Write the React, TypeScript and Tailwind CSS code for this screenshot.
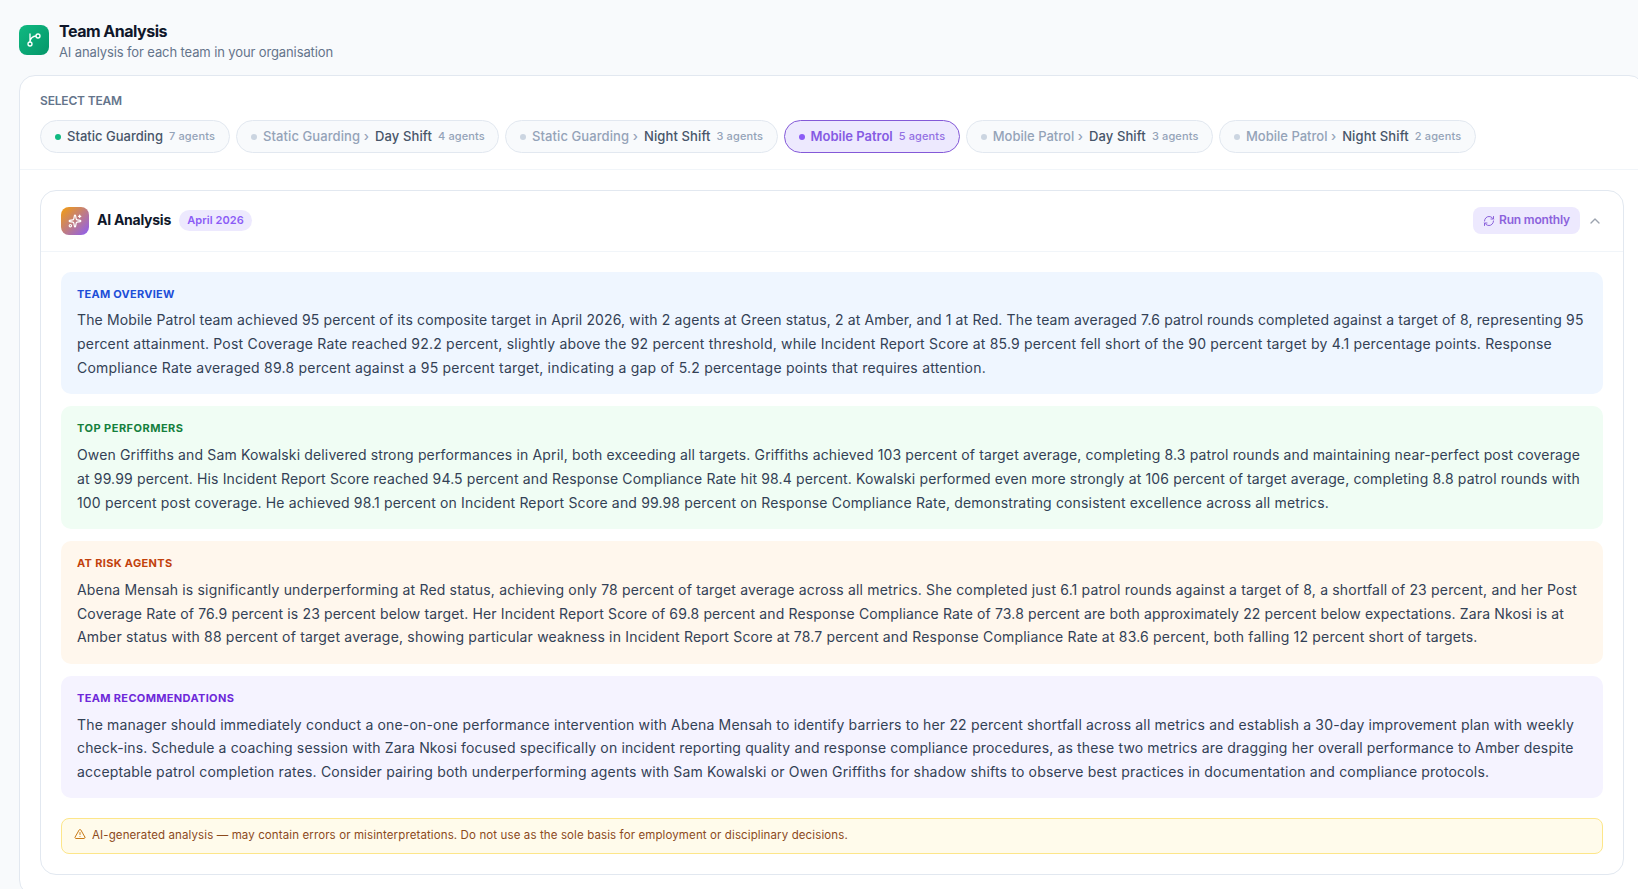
import { ChevronUp, RefreshCw, Sparkles, TriangleAlert } from 'lucide-react';

type Team = {
  parent?: string;
  name: string;
  agents: string;
  dot: string;
  parentTracking?: string;
  nameTracking: string;
  active?: boolean;
};

const teams: Team[] = [
  { name: 'Static Guarding', agents: '7 agents', dot: 'bg-[#10b981]', nameTracking: 'tracking-[0.011px]' },
  { parent: 'Static Guarding ›', name: 'Day Shift', agents: '4 agents', dot: 'bg-[#cbd5e1]', parentTracking: 'tracking-[0.088px]', nameTracking: 'tracking-[0.123px]' },
  { parent: 'Static Guarding ›', name: 'Night Shift', agents: '3 agents', dot: 'bg-[#cbd5e1]', parentTracking: 'tracking-[0.088px]', nameTracking: 'tracking-[0.112px]' },
  { name: 'Mobile Patrol', agents: '5 agents', dot: 'bg-[#8b5cf6]', nameTracking: 'tracking-[-0.01px]', active: true },
  { parent: 'Mobile Patrol ›', name: 'Day Shift', agents: '3 agents', dot: 'bg-[#cbd5e1]', parentTracking: 'tracking-[0.01px]', nameTracking: 'tracking-[0.123px]' },
  { parent: 'Mobile Patrol ›', name: 'Night Shift', agents: '2 agents', dot: 'bg-[#cbd5e1]', parentTracking: 'tracking-[0.01px]', nameTracking: 'tracking-[0.13px]' },
];

type Section = {
  title: string;
  box: string;
  heading: string;
  lines: { text: string; tracking: string }[];
};

const sections: Section[] = [
  {
    title: 'TEAM OVERVIEW',
    box: 'bg-[#eff6ff]',
    heading: 'text-[#1d4ed8] tracking-[0.25px]',
    lines: [
      { text: 'The Mobile Patrol team achieved 95 percent of its composite target in April 2026, with 2 agents at Green status, 2 at Amber, and 1 at Red. The team averaged 7.6 patrol rounds completed against a target of 8, representing 95', tracking: 'tracking-[0.139px]' },
      { text: 'percent attainment. Post Coverage Rate reached 92.2 percent, slightly above the 92 percent threshold, while Incident Report Score at 85.9 percent fell short of the 90 percent target by 4.1 percentage points. Response', tracking: 'tracking-[0.203px]' },
      { text: 'Compliance Rate averaged 89.8 percent against a 95 percent target, indicating a gap of 5.2 percentage points that requires attention.', tracking: 'tracking-[0.218px]' },
    ],
  },
  {
    title: 'TOP PERFORMERS',
    box: 'bg-[#f0fdf4]',
    heading: 'text-[#15803d] tracking-[0.48px]',
    lines: [
      { text: 'Owen Griffiths and Sam Kowalski delivered strong performances in April, both exceeding all targets. Griffiths achieved 103 percent of target average, completing 8.3 patrol rounds and maintaining near-perfect post coverage', tracking: 'tracking-[0.141px]' },
      { text: 'at 99.99 percent. His Incident Report Score reached 94.5 percent and Response Compliance Rate hit 98.4 percent. Kowalski performed even more strongly at 106 percent of target average, completing 8.8 patrol rounds with', tracking: 'tracking-[0.145px]' },
      { text: '100 percent post coverage. He achieved 98.1 percent on Incident Report Score and 99.98 percent on Response Compliance Rate, demonstrating consistent excellence across all metrics.', tracking: 'tracking-[0.154px]' },
    ],
  },
  {
    title: 'AT RISK AGENTS',
    box: 'bg-[#fff7ed]',
    heading: 'text-[#c2410c] tracking-[0.33px]',
    lines: [
      { text: 'Abena Mensah is significantly underperforming at Red status, achieving only 78 percent of target average across all metrics. She completed just 6.1 patrol rounds against a target of 8, a shortfall of 23 percent, and her Post', tracking: 'tracking-[0.174px]' },
      { text: 'Coverage Rate of 76.9 percent is 23 percent below target. Her Incident Report Score of 69.8 percent and Response Compliance Rate of 73.8 percent are both approximately 22 percent below expectations. Zara Nkosi is at', tracking: 'tracking-[0.145px]' },
      { text: 'Amber status with 88 percent of target average, showing particular weakness in Incident Report Score at 78.7 percent and Response Compliance Rate at 83.6 percent, both falling 12 percent short of targets.', tracking: 'tracking-[0.191px]' },
    ],
  },
  {
    title: 'TEAM RECOMMENDATIONS',
    box: 'bg-[#f5f3ff]',
    heading: 'text-[#6d28d9] tracking-[0.34px]',
    lines: [
      { text: 'The manager should immediately conduct a one-on-one performance intervention with Abena Mensah to identify barriers to her 22 percent shortfall across all metrics and establish a 30-day improvement plan with weekly', tracking: 'tracking-[0.172px]' },
      { text: 'check-ins. Schedule a coaching session with Zara Nkosi focused specifically on incident reporting quality and response compliance procedures, as these two metrics are dragging her overall performance to Amber despite', tracking: 'tracking-[0.145px]' },
      { text: 'acceptable patrol completion rates. Consider pairing both underperforming agents with Sam Kowalski or Owen Griffiths for shadow shifts to observe best practices in documentation and compliance protocols.', tracking: 'tracking-[0.178px]' },
    ],
  },
];

function BranchIcon() {
  return (
    <svg width="16" height="16" viewBox="0 0 24 24" fill="none" stroke="currentColor" strokeWidth="2" strokeLinecap="round" strokeLinejoin="round">
      <path d="M15 6a9 9 0 0 0-9 9V3" />
      <circle cx="18" cy="6" r="3" />
      <circle cx="6" cy="18" r="3" />
    </svg>
  );
}

function TeamPill({ team }: { team: Team }) {
  return (
    <button
      className={`flex h-[33px] items-center gap-1.5 rounded-full border px-3.5 text-[13px] whitespace-nowrap ${
        team.active ? 'border-[#8459d8] bg-[#ede9fe] font-semibold text-[#855be3]' : 'border-[#e2e8f0] bg-[#f8fafc] font-medium text-[#475569]'
      }`}
    >
      <span className={`size-1.5 rounded-full ${team.dot}`} />
      {team.parent && <span className={`text-[#94a3b8] ${team.parentTracking}`}>{team.parent}</span>}
      <span className={team.nameTracking}>{team.name}</span>
      <span className={`w-[46px] text-[11px] font-medium tracking-[0.133px] ${team.active ? 'text-[#9370e3]' : 'text-[#94a3b8]'}`}>{team.agents}</span>
    </button>
  );
}

function AnalysisSection({ section }: { section: Section }) {
  return (
    <section className={`h-[122.7px] rounded-[10px] px-4 pt-3.5 ${section.box}`}>
      <h3 className={`mb-[6.4px] text-[11px] leading-[16.5px] font-bold ${section.heading}`}>{section.title}</h3>
      <p className="text-sm leading-[23.8px] text-[#334155]">
        {section.lines.map((line) => (
          <span key={line.text} className={`block whitespace-nowrap ${line.tracking}`}>
            {line.text}
          </span>
        ))}
      </p>
    </section>
  );
}

export default function App() {
  return (
    <div className="h-[889px] w-full overflow-hidden bg-[#f8fafc] pt-[18px] pl-[19px] font-['Inter',sans-serif]">
      <header className="mb-3.5 flex h-[43px] items-center gap-2.5">
        <div className="flex size-[30px] items-center justify-center rounded-lg bg-[linear-gradient(135deg,#10b981,#059669)] text-white">
          <BranchIcon />
        </div>
        <div className="pt-0.5">
          <h1 className="text-base leading-6 font-bold tracking-[-0.492px] text-[#0f172a]">Team Analysis</h1>
          <p className="text-[13px] leading-[19.5px] tracking-[-0.117px] text-[#64748b]">AI analysis for each team in your organisation</p>
        </div>
      </header>

      <main className="w-[1626px] rounded-2xl border border-[#e2e8f0] bg-white">
        <div className="border-b border-[#f1f5f9] px-5 pt-4 pb-4">
          <h2 className="mb-2.5 text-xs leading-[18px] font-semibold tracking-[-0.173px] text-[#64748b]">SELECT TEAM</h2>
          <div className="flex gap-1.5">
            {teams.map((team) => (
              <TeamPill key={(team.parent ?? '') + team.name} team={team} />
            ))}
          </div>
        </div>

        <div className="p-5">
          <div className="rounded-2xl border border-[#e2e8f0] bg-white">
            <div className="flex items-center border-b border-[#f1f5f9] px-5 py-4">
              <div className="flex size-7 items-center justify-center rounded-lg bg-[linear-gradient(135deg,#f59e0b,#8b5cf6)] text-white">
                <Sparkles size={14} />
              </div>
              <h2 className="ml-2 pb-0.5 text-sm font-bold tracking-[-0.259px] text-[#0f172a]">AI Analysis</h2>
              <span className="mb-px ml-2 flex h-[21px] w-[73px] items-center justify-center rounded-full bg-[#ede9fe] pb-px text-[11px] font-semibold tracking-[0.063px] text-[#8b5cf6]">
                April 2026
              </span>
              <button className="mb-px ml-auto flex h-[27px] w-[107px] items-center gap-1 rounded-lg bg-[#ede9fe] pl-2.5 text-xs font-semibold tracking-[-0.173px] whitespace-nowrap text-[#8b62dc]">
                <RefreshCw size={12} />
                <span className="pb-px">Run monthly</span>
              </button>
              <ChevronUp size={16} className="mb-px ml-[7px] text-[#9ca3af]" />
            </div>

            <div className="px-5 pt-[19.6px] pb-5">
              <div className="flex flex-col gap-3">
                {sections.map((section) => (
                  <AnalysisSection key={section.title} section={section} />
                ))}
              </div>
              <div className="mt-5 flex h-[35.6px] items-start gap-1.5 rounded-lg border border-[#fde68a] bg-[#fffbeb] px-3 pt-[7px]">
                <TriangleAlert size={12} className="mt-[2px] shrink-0 text-[#c97a16]" />
                <p className="pt-px text-[11.5px] leading-[17.25px] tracking-[0.115px] text-[#8c4a1c]">
                  AI-generated analysis — may contain errors or misinterpretations. Do not use as the sole basis for employment or disciplinary decisions.
                </p>
              </div>
            </div>
          </div>
        </div>
      </main>
    </div>
  );
}
